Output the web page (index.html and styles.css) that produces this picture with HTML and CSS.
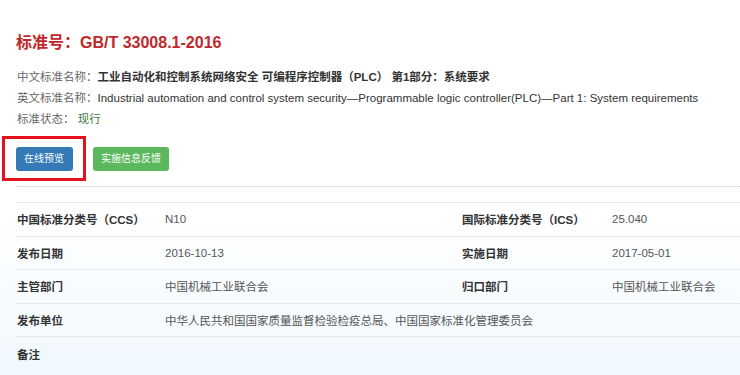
FILE: index.html
```html
<!DOCTYPE html>
<html>
<head>
	<title>标准详情</title>
	<meta charset="utf-8">
	<link rel="stylesheet" href="styles.css">
</head>
<body>
	<div id="container">
		<h1 class="std-title">标准号：GB/T 33008.1-2016</h1>

		<div class="std-info">
			<p><span class="key">中文标准名称：</span><b>工业自动化和控制系统网络安全 可编程序控制器（PLC） 第1部分：系统要求</b></p>
			<p><span class="key">英文标准名称：</span>Industrial automation and control system security—Programmable logic controller(PLC)—Part 1: System requirements</p>
			<p><span class="key">标准状态：</span> <span class="state">现行</span></p>
		</div>

		<div class="btn-row">
			<a class="btn btn-blue">在线预览</a>
			<a class="btn btn-green">实施信息反馈</a>
			<span class="mark"></span>
		</div>

		<div class="line"></div>

		<table class="detail">
			<tr>
				<th>中国标准分类号（CCS）</th>
				<td>N10</td>
				<th>国际标准分类号（ICS）</th>
				<td>25.040</td>
			</tr>
			<tr>
				<th>发布日期</th>
				<td>2016-10-13</td>
				<th>实施日期</th>
				<td>2017-05-01</td>
			</tr>
			<tr>
				<th>主管部门</th>
				<td>中国机械工业联合会</td>
				<th>归口部门</th>
				<td>中国机械工业联合会</td>
			</tr>
			<tr>
				<th>发布单位</th>
				<td colspan="3">中华人民共和国国家质量监督检验检疫总局、中国国家标准化管理委员会</td>
			</tr>
			<tr class="last">
				<th>备注</th>
				<td colspan="3"></td>
			</tr>
		</table>
	</div>
</body>
</html>
```

FILE: styles.css
```css
html, body{
	margin: 0;
	padding: 0;
}

body{
	min-height: 375px;
	font-family: "Liberation Sans", "Noto Sans CJK SC", sans-serif;
	color: #333;
	background: linear-gradient(#fff 0, #fff 210px, #f0f8fd 375px);
	overflow: hidden;
}

#container{
	padding: 32px 0 0 16px;
}

.std-title{
	margin: 0;
	font-size: 16px;
	line-height: 22px;
	font-weight: bold;
	color: #c0282b;
}

.std-info{
	margin-top: 13px;
	font-size: 11.5px;
	line-height: 21px;
	color: #333;
}

.std-info p{
	margin: 0;
	padding-left: 1px;
	white-space: nowrap;
}

.std-info .key{
	color: #666;
}

.std-info .state{
	color: #3c763d;
}

.btn-row{
	position: relative;
	display: flex;
	gap: 20px;
	margin-top: 17px;
}

.btn{
	display: block;
	height: 24px;
	line-height: 24px;
	padding: 0 8px;
	font-size: 10px;
	color: #fff;
	border-radius: 3px;
}

.btn-blue{
	background-color: #337ab7;
	width: 41px;
}

.btn-green{
	background-color: #5cb85c;
	width: 60px;
}

.mark{
	position: absolute;
	left: -14px;
	top: -11px;
	width: 78px;
	height: 39px;
	border: 3px solid #e3121d;
}

.line{
	margin-top: 15px;
	border-top: 1px dotted #ccc;
}

.detail{
	margin-top: 15px;
	width: 724px;
	border-collapse: collapse;
	font-size: 11.5px;
}

.detail th, .detail td{
	height: 32.5px;
	padding: 0 0 0 1px;
	text-align: left;
	vertical-align: middle;
	border-top: 1px solid #e8e8e8;
}

.detail th{
	font-weight: bold;
	color: #333;
}

.detail td{
	color: #555;
}

.detail tr > :nth-child(1){
	width: 147px;
}

.detail tr > :nth-child(2){
	width: 296px;
}

.detail tr > :nth-child(3){
	width: 149px;
}

.detail tr.last th, .detail tr.last td{
	height: 34px;
}
```
